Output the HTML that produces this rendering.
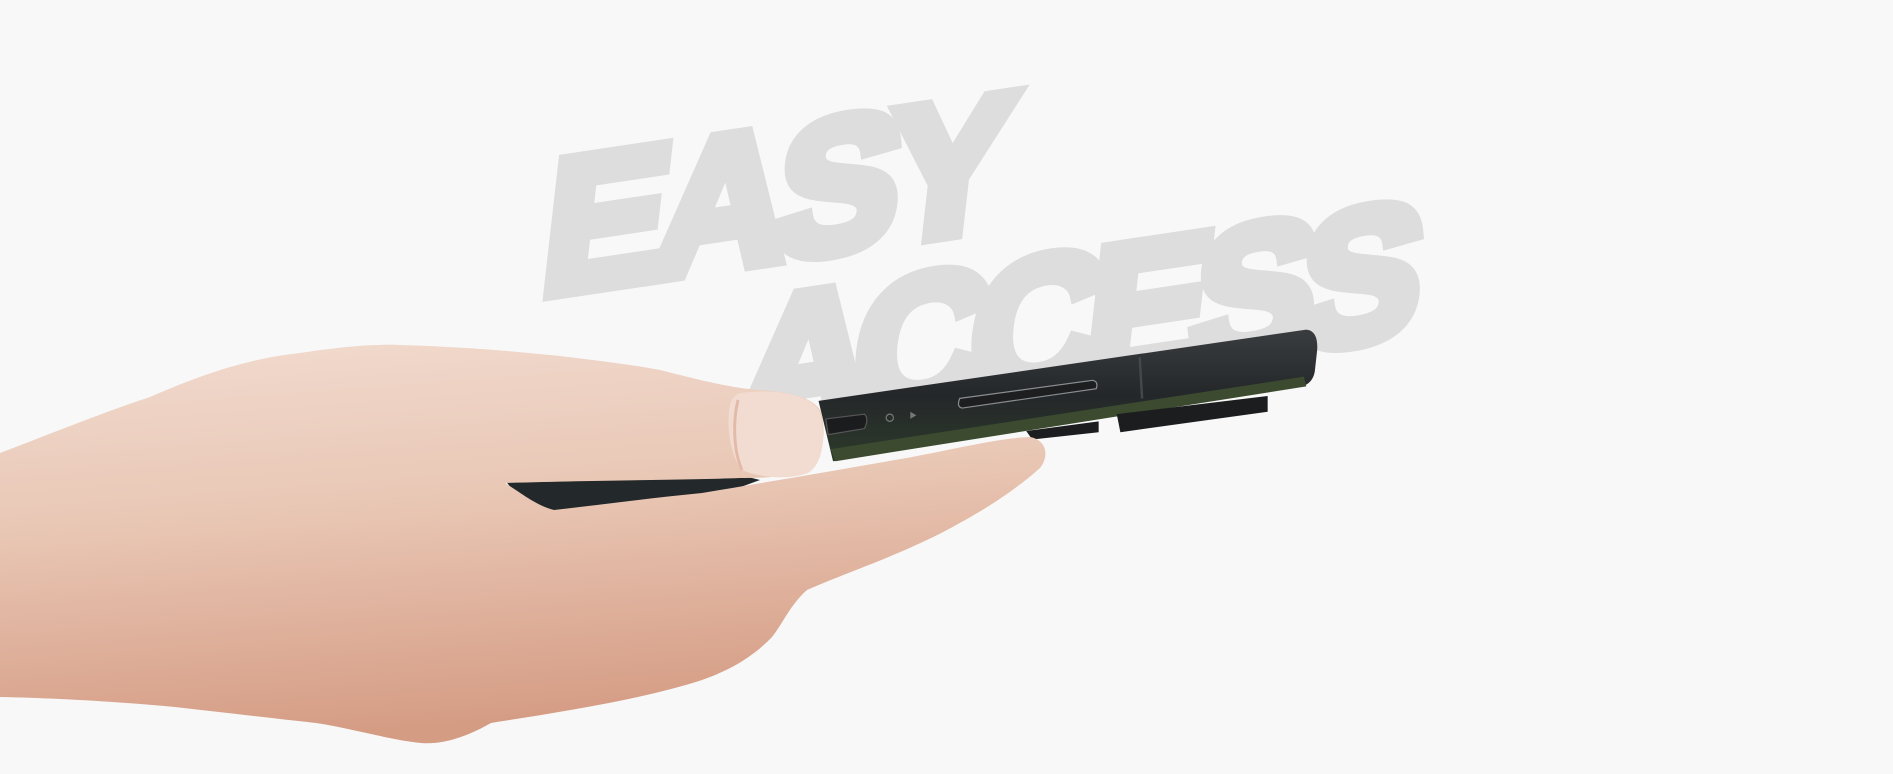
<!DOCTYPE html>
<html><head><meta charset="utf-8"><style>
html,body{margin:0;padding:0;width:1893px;height:774px;overflow:hidden;background:#f8f8f8;position:relative}
.t{position:absolute;font-family:"Liberation Sans",sans-serif;font-weight:bold;font-style:normal;font-size:186px;line-height:190px;color:#dcdddc;-webkit-text-stroke:15px #dcdddc;paint-order:stroke fill;white-space:nowrap;transform-origin:0 161px;transform:rotate(-8.5deg) skewX(-15deg)}
svg{position:absolute;left:0;top:0;display:block}
</style></head><body>
<div class="t" style="left:538px;top:137px;letter-spacing:-12px">EASY</div>
<div class="t" style="left:732px;top:277px;letter-spacing:-17px">ACCESS</div>
<svg width="1893" height="774" viewBox="0 0 1893 774" xmlns="http://www.w3.org/2000/svg">
<defs>
<linearGradient id="skin" x1="0" y1="0" x2="0.2" y2="1">
<stop offset="0" stop-color="#f1dbcf"/><stop offset="0.45" stop-color="#e9c7b5"/><stop offset="1" stop-color="#d59c84"/>
</linearGradient>
<linearGradient id="ph" x1="0" y1="0" x2="0" y2="1">
<stop offset="0" stop-color="#3a3d40"/><stop offset="0.5" stop-color="#24272a"/><stop offset="1" stop-color="#2c3a2a"/>
</linearGradient>
</defs>
<path d="M505,480 L720,470 L760,480 L705,500 L560,515 L520,500 Z" fill="#23282a"/>
<g transform="scale(1.2073)">
<path d="M678,332 L1082,273 Q1092,274 1091,290 L1089,308 Q1087,318 1078,320 L690,382 Z" fill="url(#ph)"/>
<path d="M688,372 L1080,312 L1082,320 L692,382 Z" fill="#3c4a30"/>
<line x1="944" y1="296" x2="946" y2="330" stroke="#44484b" stroke-width="2"/>
<path d="M795,330 L905,315 Q910,316 908,322 L797,338 Q792,337 795,330Z" fill="#1c1e20" stroke="#8a8d90" stroke-width="1"/>
<circle cx="737" cy="346" r="3" fill="none" stroke="#777" stroke-width="1"/>
<path d="M754,341 L759,344 L754,347Z" fill="#777"/>
<path d="M684,347 L716,343 Q720,347 716,355 L686,360Z" fill="#1a1c1e" stroke="#555" stroke-width="1"/>
<path d="M925,343 L1050,328 L1050,341 L928,358 Z" fill="#1b1d1f"/>
<path d="M850,357 L910,349 L910,358 L855,364 Z" fill="#1b1d1f"/>
</g>
<path d="M0,453 C60,430 110,410 150,397 C200,375 250,358 300,353 C340,347 370,344 400,345 C470,347 520,352 560,356 C610,362 640,366 660,370 C700,380 730,388 760,390 C790,392 815,398 821,412 C826,430 824,455 812,468 C800,476 770,478 740,478 C690,480 610,480 505,483 C520,492 535,505 554,510 C600,505 650,498 702,493 C780,480 850,468 912,457 C960,448 1000,438 1030,437 C1046,440 1050,455 1040,468 C1010,495 975,515 947,530 C900,555 840,575 807,590 C790,605 782,625 772,637 C750,660 725,672 702,680 C640,700 560,712 491,723 C470,735 445,745 421,743 C390,740 350,728 316,723 C270,718 220,712 175,707 C110,701 50,698 0,697 Z" fill="url(#skin)"/>
<path d="M740,393 C780,388 815,396 821,415 C826,440 822,465 808,473 C790,480 760,478 742,470 C730,455 726,425 730,405 C732,398 735,395 740,393Z" fill="#f2dcd2"/>
<path d="M738,400 C733,420 733,450 742,470" fill="none" stroke="#e2bba8" stroke-width="3"/>
</svg>
</body></html>
